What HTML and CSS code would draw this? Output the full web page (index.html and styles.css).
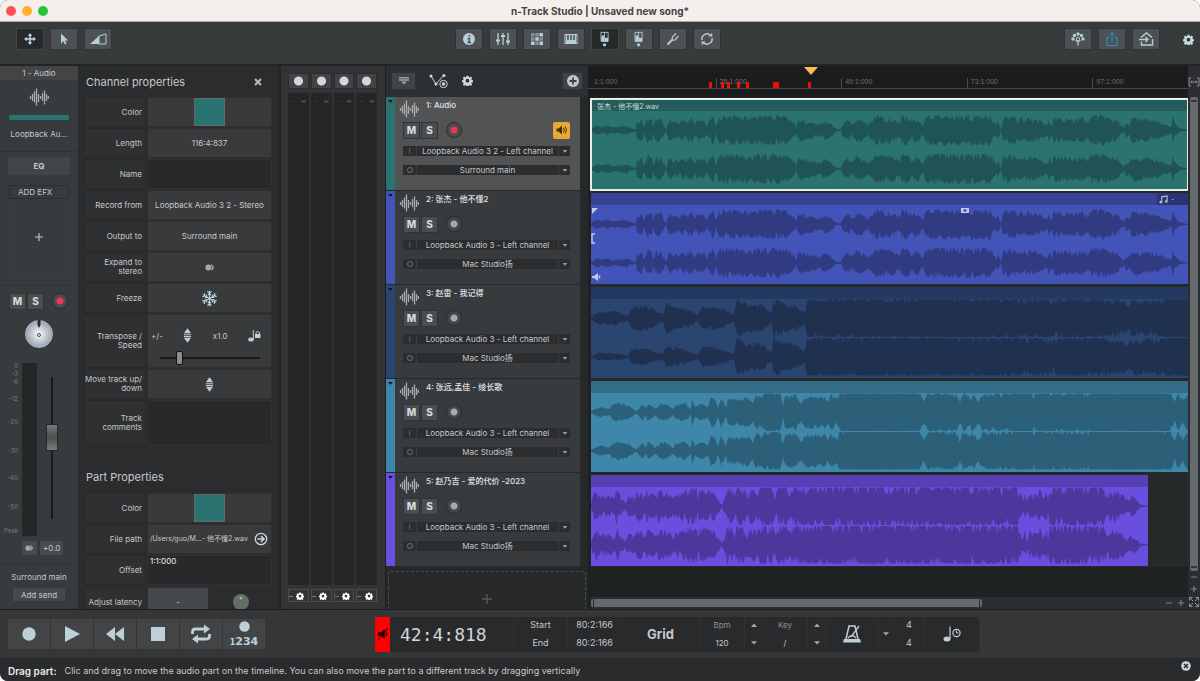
FILE: index.html
```
<!DOCTYPE html>
<html lang="en">
<head>
    <meta charset="UTF-8">
    <meta name="viewport" content="width=device-width, initial-scale=1.0">
    <title>n-Track Studio | Unsaved new song*</title>
    <link rel="stylesheet" href="styles.css">
</head>
<body>
    <!-- shared icons -->
    <svg class="sprite" aria-hidden="true">
        <symbol id="i-wave" viewBox="0 0 20 18"><path d="M1.500 8v3M3.500 6v7M5.500 3.500v11M7.500 .5v17M9.500 6v8M11.500 8v3M13.500 5v8M15.500 2.500v14M17.500 6v7M19.300 8v3" stroke="currentColor" stroke-width="1.300"/></symbol>
        <symbol id="i-gear" viewBox="0 0 16 16"><path fill-rule="evenodd" fill="currentColor" d="M6.500 1h3l.4 2 1.100.5 1.800-1.200 2 2-1.200 1.800.5 1.100 2 .4v3l-2 .4-.5 1.100 1.200 1.800-2 2-1.800-1.200-1.100.5-.4 1.800h-3l-.4-1.800-1.100-.5-1.800 1.200-2-2 1.200-1.800-.5-1.100-1.900-.4v-3l1.900-.4.5-1.100-1.200-1.800 2-2 1.800 1.200 1.100-.5zM8 5.500a2.700 2.700 0 1 0 0 5.400 2.700 2.700 0 0 0 0-5.400z"/></symbol>
        <symbol id="i-updown" viewBox="0 0 10 16"><path fill="currentColor" d="M5 0l4 5.500H1zM1 6.500h8v1.100H1zM1 8.500h8v1.100H1zM5 16l4-5.500H1z"/></symbol>
        <symbol id="i-down" viewBox="0 0 8 5"><path fill="currentColor" d="M0 0h8L4 4.500z"/></symbol>
        <symbol id="i-up" viewBox="0 0 8 5"><path fill="currentColor" d="M0 5h8L4 .5z"/></symbol>
        <symbol id="i-stereo" viewBox="0 0 12 8"><circle cx="4" cy="4" r="3.500" fill="currentColor"/><path d="M7.500.800a3.300 3.300 0 0 1 0 6.400 4.500 4.500 0 0 0 0-6.400z" fill="currentColor" stroke="currentColor"/></symbol>
        <symbol id="i-plus" viewBox="0 0 10 10"><path d="M5 0v10M0 5h10" stroke="currentColor" stroke-width="1.400"/></symbol>
        <symbol id="i-minus" viewBox="0 0 10 10"><path d="M0 5h10" stroke="currentColor" stroke-width="1.400"/></symbol>
        <symbol id="i-mixer" viewBox="0 0 16 16"><path d="M3 2v12M8 2v12M13 2v12" stroke="currentColor" stroke-width="1.300"/><path d="M1 9.500h4M6 5h4M11 10.500h4" stroke="currentColor" stroke-width="2.200"/></symbol>
        <symbol id="i-levels" viewBox="0 0 16 18"><path d="M3.500 1.500h8v10h-8zM7.500 1.500v10" fill="none" stroke="currentColor"/><path d="M4 5h3v7H4zM8 7.500h3.500V12H8z" fill="currentColor"/><circle cx="7.500" cy="15.500" r="1.800" fill="currentColor"/></symbol>
    </svg>

    <div class="app">
        <header class="titlebar">
            <div class="lights"><i class="red"></i><i class="amber"></i><i class="green"></i></div>
            <h1>n-Track Studio | Unsaved new song*</h1>
            <div></div>
        </header>

        <nav class="toolbar">
            <div class="tools">
                <button class="tool active" aria-label="Move"><svg viewBox="0 0 16 16"><path d="M8 4v8M4 8h8" stroke="currentColor"/><circle cx="8" cy="8" r="1.800" fill="currentColor"/><path fill="currentColor" d="M8 2l2 2.500-2 1.500-2-1.500zM8 14l2-2.500-2-1.500-2 1.500zM2 8l2.500-2L6 8l-1.500 2zM14 8l-2.500-2L10 8l1.500 2z"/></svg></button>
                <button class="tool" aria-label="Select"><svg viewBox="0 0 16 16"><path fill="currentColor" d="M5 2.500v10l2.400-2.200 1.500 3.300 1.700-.8L9.100 9.600l3-.2z"/></svg></button>
                <button class="tool wide" aria-label="Fade"><svg viewBox="0 0 18 14"><path fill="currentColor" d="M1 12L10 4v8z"/><path d="M10 4l7-2v10h-7M10 4V12" fill="none" stroke="currentColor"/></svg></button>
            </div>
            <div class="tools">
                <button class="tool" aria-label="Info"><svg viewBox="0 0 16 16"><circle cx="8" cy="8" r="6" fill="currentColor"/><path d="M8.500 4v1.600M6.500 7.500h2L8 11.500M6.500 11.500h3.500" stroke="#4e5153" stroke-width="1.500" fill="none"/></svg></button>
                <button class="tool" aria-label="Mixer"><svg><use href="#i-mixer"/></svg></button>
                <button class="tool" aria-label="Step sequencer"><svg viewBox="0 0 16 16"><path fill="currentColor" opacity=".5" d="M2 2h3.500v3.500H2zM6.300 2h3.500v3.500H6.300zM10.500 6.300H14v3.500h-3.500zM6.300 10.500h3.500V14H6.300zM2 6.300h3.500v3.500H2z"/><path fill="currentColor" d="M10.500 2H14v3.500h-3.500zM6.300 6.300h3.500v3.500H6.300zM2 10.500h3.500V14H2zM10.500 10.500H14V14h-3.500z"/></svg></button>
                <button class="tool" aria-label="Keyboard"><svg viewBox="0 0 16 16"><path fill="currentColor" d="M1.500 3h13v10h-13z"/><path d="M5 4v5M8 4v5M11 4v5" stroke="#4e5153" stroke-width="1.600"/><path d="M2.500 4v8M13.500 4v8" stroke="#4e5153" stroke-width=".5"/></svg></button>
                <button class="tool active" aria-label="Input meters"><svg viewBox="0 0 16 18"><use href="#i-levels"/></svg></button>
                <button class="tool" aria-label="Output meters"><svg viewBox="0 0 16 18"><use href="#i-levels"/></svg></button>
                <button class="tool" aria-label="Tuner"><svg viewBox="0 0 16 16"><path d="M2.500 13.500L7.500 8.500" stroke="currentColor" stroke-width="2"/><path d="M13.500 5L10.500 8.500q-2 1.500-3 0t.5-3L11 2.500" fill="none" stroke="currentColor" stroke-width="1.200"/></svg></button>
                <button class="tool" aria-label="Loop"><svg viewBox="0 0 16 16"><path d="M3 9a5 5 0 0 1 8.500-4.500M13 7a5 5 0 0 1-8.500 4.500" fill="none" stroke="currentColor" stroke-width="1.500"/><path fill="currentColor" d="M13.500 5.500h-4l3.500-3.500zM2.500 10.500h4L3 14z"/></svg></button>
            </div>
            <div class="tools">
                <button class="tool" aria-label="Community"><svg viewBox="0 0 16 16"><g fill="currentColor"><circle cx="3" cy="8" r="1.700"/><circle cx="4.500" cy="4.500" r="1.700"/><circle cx="8" cy="3" r="1.700"/><circle cx="11.500" cy="4.500" r="1.700"/><circle cx="13" cy="8" r="1.700"/></g><circle cx="8" cy="8" r="1.700" fill="none" stroke="currentColor"/><path d="M8 10v4.500M5.500 9.500l1.500 1M10.500 9.500l-1.500 1" stroke="currentColor" stroke-width="1.300"/></svg></button>
                <button class="tool share" aria-label="Share"><svg viewBox="0 0 16 16"><path d="M5.500 6H3v8.500h10V6h-2.500M8 11V1.500M5.500 4L8 1.500 10.500 4" fill="none" stroke="currentColor"/></svg></button>
                <button class="tool" aria-label="Export"><svg viewBox="0 0 16 16"><path d="M3 6.500L8.500 2 14 6.500M3.500 10.500v3.500h11V8M1 8.500h8.500M7.500 6l2.500 2.500L7.500 11" fill="none" stroke="currentColor" stroke-width="1.400"/></svg></button>
                <button class="bare" aria-label="Settings"><svg><use href="#i-gear"/></svg></button>
            </div>
        </nav>

        <main class="workspace">
            <section class="strip">
                <h2>1 - Audio</h2>
                <div class="strip-top">
                    <svg class="wave-icon"><use href="#i-wave"/></svg>
                    <i class="color-bar"></i>
                    <span>Loopback Au...</span>
                </div>
                <div class="strip-fx">
                    <button class="eq">EQ</button>
                    <button class="efx">ADD EFX</button>
                    <button class="fx-slot" aria-label="Add effect"><svg><use href="#i-plus"/></svg></button>
                </div>
                <div class="strip-fader">
                    <div class="ms-row">
                        <button class="ms">M</button><button class="ms">S</button>
                        <button class="rec armed" aria-label="Record"></button>
                    </div>
                    <button class="pan" aria-label="Pan"><svg viewBox="0 0 28 28"><path d="M12.500 0h3v5l-1.500 3-1.500-3z" fill="#2b2c2e"/><circle cx="14" cy="15" r="1.500" fill="none" stroke="#4c5058"/></svg></button>
                    <div class="fader">
                        <ul class="scale"><li>0</li><li>-3</li><li>-6</li><li>-12</li><li>-20</li><li>-30</li><li>-40</li><li>-50</li><li>Peak</li></ul>
                        <i class="level"></i>
                        <input type="range" class="volume" aria-label="Volume" min="0" max="100" value="59">
                    </div>
                    <div class="gain"><button aria-label="Stereo"><svg><use href="#i-stereo"/></svg></button><button>+0.0</button></div>
                </div>
                <div class="strip-send">
                    <span>Surround main</span>
                    <button>Add send</button>
                </div>
            </section>

            <section class="props">
                <div class="props-head"><h2>Channel properties</h2><button class="bare" aria-label="Close"><svg viewBox="0 0 8 8"><path d="M1 1l6 6M7 1L1 7" stroke="currentColor" stroke-width="2.200"/></svg></button></div>
                <div class="prop"><span>Color</span><div class="value"><button class="swatch" aria-label="Channel color"></button></div></div>
                <div class="prop"><span>Length</span><div class="value">116:4:837</div></div>
                <div class="prop"><label for="name">Name</label><input type="text" id="name"></div>
                <div class="prop"><span>Record from</span><button class="value">Loopback Audio 3 2 - Stereo</button></div>
                <div class="prop"><span>Output to</span><button class="value">Surround main</button></div>
                <div class="prop"><span>Expand to<br>stereo</span><button class="value" aria-label="Expand to stereo"><svg class="stereo"><use href="#i-stereo"/></svg></button></div>
                <div class="prop"><span>Freeze</span><button class="value" aria-label="Freeze"><svg class="snow" viewBox="-9 -9 18 18"><g id="arms"><path id="arm" d="M0 0V-8.300M-2.200-7.500L0-5.500 2.200-7.500M-1.800-4.800L0-3.200 1.800-4.800" fill="none" stroke="currentColor" stroke-width="1.100"/><use href="#arm" transform="rotate(60)"/><use href="#arm" transform="rotate(120)"/></g><use href="#arms" transform="rotate(180)"/></svg></button></div>
                <div class="prop transpose">
                    <label for="speed">Transpose /<br>Speed</label>
                    <div class="value">
                        <div class="transpose-row"><span>+/-</span><svg class="updown"><use href="#i-updown"/></svg><span>x1.0</span><svg class="note-lock" viewBox="0 0 13 13"><ellipse cx="3" cy="10.500" rx="2.800" ry="2" fill="currentColor"/><path d="M5.300 10V1" stroke="currentColor"/><path d="M7 5h5.500v4H7z" fill="currentColor"/><path d="M8 5V3.500q1.700-2 3.500 0V5" fill="none" stroke="currentColor"/></svg></div>
                        <input type="range" id="speed" class="speed" min="0" max="100" value="18">
                    </div>
                </div>
                <div class="prop"><span>Move track up/<br>down</span><button class="value" aria-label="Move track"><svg class="updown"><use href="#i-updown"/></svg></button></div>
                <div class="prop comments"><label for="comments">Track<br>comments</label><textarea id="comments"></textarea></div>

                <div class="props-head part"><h2>Part Properties</h2></div>
                <div class="prop"><span>Color</span><div class="value"><button class="swatch" aria-label="Part color"></button></div></div>
                <div class="prop"><span>File path</span><div class="value path"><span>/Users/guo/M...- 他不懂2.wav</span><svg viewBox="0 0 14 14"><circle cx="7" cy="7" r="5.700" fill="none" stroke="currentColor" stroke-width="1.300"/><path d="M3.500 7h6M7 4l3 3-3 3" fill="none" stroke="currentColor" stroke-width="1.600"/></svg></div></div>
                <div class="prop"><label for="offset">Offset</label><textarea id="offset">1:1:000</textarea></div>
                <div class="prop latency"><span>Adjust latency</span><button class="value">-</button><div class="knob-cell"><i class="knob"></i></div></div>
            </section>

            <section class="meters">
                <div class="meter"><button class="mon" aria-label="Meter 1"></button><div class="tube"><span>-</span><span>∞</span></div><button class="cfg" aria-label="Meter 1 settings"><svg><use href="#i-gear"/></svg></button></div>
                <div class="meter"><button class="mon" aria-label="Meter 2"></button><div class="tube"><span>-</span><span>∞</span></div><button class="cfg" aria-label="Meter 2 settings"><svg><use href="#i-gear"/></svg></button></div>
                <div class="meter"><button class="mon" aria-label="Meter 3"></button><div class="tube"><span>-</span><span>∞</span></div><button class="cfg" aria-label="Meter 3 settings"><svg><use href="#i-gear"/></svg></button></div>
                <div class="meter"><button class="mon" aria-label="Meter 4"></button><div class="tube"><span>-</span><span>∞</span></div><button class="cfg" aria-label="Meter 4 settings"><svg><use href="#i-gear"/></svg></button></div>
            </section>

            <section class="tracks">
                <div class="tracks-head">
                    <button class="tool" aria-label="Collapse"><svg viewBox="0 0 16 16"><path fill="currentColor" opacity=".7" d="M3 4h10v1.500H3zM3 6.200h10v1.500H3zM5 8.400h6L8 11.500z"/></svg></button>
                    <button class="bare automation" aria-label="Automation"><svg viewBox="0 0 20 16"><path d="M2 3l5 8 8-9" fill="none" stroke="currentColor"/><circle cx="2" cy="3" r="1.500" fill="currentColor"/><circle cx="7" cy="11" r="1.500" fill="currentColor"/><circle cx="15" cy="2.500" r="1.500" fill="currentColor"/><circle cx="14.500" cy="11" r="3.700" fill="none" stroke="currentColor"/><circle cx="14.500" cy="11" r="1.700" fill="currentColor"/></svg></button>
                    <button class="bare" aria-label="Track settings"><svg><use href="#i-gear"/></svg></button>
                    <button class="tool add" aria-label="Add track"><svg viewBox="0 0 16 16"><circle cx="8" cy="8" r="6" fill="currentColor"/><path d="M8 4.500v7M4.500 8h7" stroke="#414446" stroke-width="1.800"/></svg></button>
                </div>

                <article class="track teal selected">
                    <i class="tab"><svg><use href="#i-down"/></svg></i>
                    <div class="track-body">
                        <div class="track-name"><svg class="wave-icon"><use href="#i-wave"/></svg><h3>1: Audio</h3></div>
                        <div class="ms-row"><button class="ms">M</button><button class="ms">S</button><button class="rec armed" aria-label="Record"></button><button class="listen" aria-label="Monitor"><svg viewBox="0 0 14 14"><path fill="currentColor" d="M1.500 5.500h2L7 2.500v9L3.500 8.500h-2z"/><path d="M8.500 5q1.500 2 0 4M10 3.500q3 3.500 0 7" fill="none" stroke="currentColor"/></svg></button></div>
                        <div class="route"><b>I</b><select aria-label="Input"><option>Loopback Audio 3 2 - Left channel</option></select><svg><use href="#i-down"/></svg></div>
                        <div class="route"><i class="out"></i><select aria-label="Output"><option>Surround main</option></select><svg><use href="#i-down"/></svg></div>
                    </div>
                </article>
                <article class="track blue">
                    <i class="tab"><svg><use href="#i-down"/></svg></i>
                    <div class="track-body">
                        <div class="track-name"><svg class="wave-icon"><use href="#i-wave"/></svg><h3>2: 张杰 - 他不懂2</h3></div>
                        <div class="ms-row"><button class="ms">M</button><button class="ms">S</button><button class="rec" aria-label="Record"></button></div>
                        <div class="route"><b>I</b><select aria-label="Input"><option>Loopback Audio 3 - Left channel</option></select><svg><use href="#i-down"/></svg></div>
                        <div class="route"><i class="out"></i><select aria-label="Output"><option>Mac Studio扬</option></select><svg><use href="#i-down"/></svg></div>
                    </div>
                </article>
                <article class="track navy">
                    <i class="tab"><svg><use href="#i-down"/></svg></i>
                    <div class="track-body">
                        <div class="track-name"><svg class="wave-icon"><use href="#i-wave"/></svg><h3>3: 赵雷 - 我记得</h3></div>
                        <div class="ms-row"><button class="ms">M</button><button class="ms">S</button><button class="rec" aria-label="Record"></button></div>
                        <div class="route"><b>I</b><select aria-label="Input"><option>Loopback Audio 3 - Left channel</option></select><svg><use href="#i-down"/></svg></div>
                        <div class="route"><i class="out"></i><select aria-label="Output"><option>Mac Studio扬</option></select><svg><use href="#i-down"/></svg></div>
                    </div>
                </article>
                <article class="track sky">
                    <i class="tab"><svg><use href="#i-down"/></svg></i>
                    <div class="track-body">
                        <div class="track-name"><svg class="wave-icon"><use href="#i-wave"/></svg><h3>4: 张远,孟佳 - 绫长歌</h3></div>
                        <div class="ms-row"><button class="ms">M</button><button class="ms">S</button><button class="rec" aria-label="Record"></button></div>
                        <div class="route"><b>I</b><select aria-label="Input"><option>Loopback Audio 3 - Left channel</option></select><svg><use href="#i-down"/></svg></div>
                        <div class="route"><i class="out"></i><select aria-label="Output"><option>Mac Studio扬</option></select><svg><use href="#i-down"/></svg></div>
                    </div>
                </article>
                <article class="track violet">
                    <i class="tab"><svg><use href="#i-down"/></svg></i>
                    <div class="track-body">
                        <div class="track-name"><svg class="wave-icon"><use href="#i-wave"/></svg><h3>5: 赵乃吉 - 爱的代价 -2023</h3></div>
                        <div class="ms-row"><button class="ms">M</button><button class="ms">S</button><button class="rec" aria-label="Record"></button></div>
                        <div class="route"><b>I</b><select aria-label="Input"><option>Loopback Audio 3 - Left channel</option></select><svg><use href="#i-down"/></svg></div>
                        <div class="route"><i class="out"></i><select aria-label="Output"><option>Mac Studio扬</option></select><svg><use href="#i-down"/></svg></div>
                    </div>
                </article>
                <button class="new-track" aria-label="New track"><svg><use href="#i-plus"/></svg></button>
            </section>

            <section class="timeline">
                <div class="ruler">
                    <span>1:1:000</span><span>25:1:000</span><span>49:1:000</span><span>73:1:000</span><span>97:1:000</span>
                    <div class="markers" id="markers"></div>
                    <svg class="playhead" viewBox="0 0 14 8"><path fill="#fbbd4b" d="M0 0h14L7 8z"/></svg>
                </div>
                <div class="lane"><div class="clip teal selected"><div class="clip-head">张杰 - 他不懂2.wav</div><svg class="wave" data-wave="a" viewBox="0 0 597 78" preserveAspectRatio="none"></svg></div></div>
                <div class="lane"><div class="clip blue"><div class="clip-head"><span class="pitch"><svg viewBox="0 0 10 10"><path d="M3 8V2l6-1v6" fill="none" stroke="currentColor" stroke-width="1.300"/><circle cx="2" cy="8" r="1.500" fill="currentColor"/><circle cx="8" cy="7.200" r="1.500" fill="currentColor"/></svg>-</span></div><svg class="wave" data-wave="a" viewBox="0 0 597 78" preserveAspectRatio="none"></svg>
                    <svg class="handles" viewBox="0 0 10 78"><g fill="#c3c8ea"><path d="M1 2h6L1 8zM1 70h2l4-3v8l-4-3H1z"/><path d="M4 28H1v9h3M8.500 69.500v3" fill="none" stroke="#c3c8ea" stroke-width="1.500"/></g></svg>
                    <svg class="gain-handle" viewBox="0 0 8 5"><path fill="#c3c8ea" d="M0 0h8v5H0z"/><path fill="#303a80" d="M2.500 1.500h3v2h-3z"/></svg></div></div>
                <div class="lane"><div class="clip navy"><div class="clip-head"></div><svg class="wave" data-wave="b" viewBox="0 0 597 78" preserveAspectRatio="none"></svg></div></div>
                <div class="lane"><div class="clip sky"><div class="clip-head"></div><svg class="wave" data-wave="c" viewBox="0 0 597 78" preserveAspectRatio="none"></svg></div></div>
                <div class="lane"><div class="clip violet short"><div class="clip-head"></div><svg class="wave" data-wave="d" viewBox="0 0 557 78" preserveAspectRatio="none"></svg></div></div>
                <div class="hscroll">
                    <div class="thumb"></div>
                    <div class="zoom"><button aria-label="Zoom out"><svg><use href="#i-minus"/></svg></button><button aria-label="Zoom in"><svg><use href="#i-plus"/></svg></button></div>
                </div>
            </section>

            <aside class="vscroll">
                <button class="fit" aria-label="Fit"><svg viewBox="0 0 12 10"><path d="M3 1H1v8h2M9 1h2v8H9M3 5h6M4 3.500L2.800 5 4 6.500M8 3.500L9.200 5 8 6.500" fill="none" stroke="currentColor"/></svg></button>
                <div class="thumb"></div>
                <button aria-label="Zoom out vertically"><svg><use href="#i-minus"/></svg></button>
                <button aria-label="Zoom in vertically"><svg><use href="#i-plus"/></svg></button>
                <button class="expand" aria-label="Expand"><svg viewBox="0 0 10 10"><path d="M.5 3.500v-3h3M6.500.5h3v3M.5 6.500v3h3M6.500 9.500h3v-3M1 1l3 3M9 1L6 4M1 9l3-3M9 9L6 6" fill="none" stroke="currentColor"/></svg></button>
            </aside>
        </main>

        <footer class="transport">
            <div class="play-buttons">
                <button aria-label="Record"><svg viewBox="0 0 20 20"><circle cx="10" cy="10" r="6.700" fill="currentColor"/></svg></button>
                <button aria-label="Play"><svg viewBox="0 0 20 20"><path fill="currentColor" d="M3 2l15 8-15 8z"/></svg></button>
                <button aria-label="Rewind"><svg viewBox="0 0 20 20"><path fill="currentColor" d="M1 10l9-7v14zM10 10l9-7v14z"/></svg></button>
                <button aria-label="Stop"><svg viewBox="0 0 20 20"><path fill="currentColor" d="M3 3h14v14H3z"/></svg></button>
                <button aria-label="Loop"><svg viewBox="0 0 20 20"><path d="M1.500 10V8q0-3 3-3H14M18.500 10v2q0 3-3 3H6" fill="none" stroke="currentColor" stroke-width="2.800"/><path fill="currentColor" d="M13 .5l6 4.500-6 4.500zM7 10.500l-6 4.500L7 19.500z"/></svg></button>
                <button class="count" aria-label="Count in"><svg viewBox="0 0 12 12"><circle cx="6" cy="6" r="5.700" fill="currentColor"/></svg><span><small>1</small>234</span></button>
            </div>
            <div class="panel">
                <button class="mute" aria-label="Mute"><svg viewBox="0 0 12 14"><path fill="#300" d="M1 5h3l4-3v10L4 9H1z"/><path d="M9 4.500q2 2.500 0 5M1 13L11 1" fill="none" stroke="#300"/></svg></button>
                <output class="clock">42:4:818</output>
                <div class="pair start"><span>Start</span><span>End</span></div>
                <div class="pair start"><span>80:2:166</span><span>80:2:166</span></div>
                <button class="grid-btn">Grid</button>
                <div class="pair bpm"><span class="dim">Bpm</span><span>120</span></div>
                <div class="pair steps"><button aria-label="Bpm up"><svg><use href="#i-up"/></svg></button><button aria-label="Bpm down"><svg><use href="#i-down"/></svg></button></div>
                <div class="pair bpm"><span class="dim">Key</span><span>/</span></div>
                <div class="pair steps"><button aria-label="Key up"><svg><use href="#i-up"/></svg></button><button aria-label="Key down"><svg><use href="#i-down"/></svg></button></div>
                <button class="metronome" aria-label="Metronome"><svg viewBox="0 0 20 20"><path d="M4 15L7 2h6l3 13" fill="none" stroke="currentColor" stroke-width="1.500"/><path fill="currentColor" d="M2 15h16l1 3.500H1z"/><path d="M6 14q4-5 8 0M9 13l8-11" fill="none" stroke="currentColor" stroke-width="1.300"/></svg></button>
                <button class="metro-menu" aria-label="Metronome menu"><svg><use href="#i-down"/></svg></button>
                <div class="pair sig"><span>4</span><span>4</span></div>
                <button class="tap" aria-label="Tap tempo"><svg viewBox="0 0 18 18"><ellipse cx="4" cy="14" rx="3.500" ry="2.500" fill="currentColor"/><path d="M7 13.500V1.500" stroke="currentColor" stroke-width="1.200"/><circle cx="13.500" cy="8" r="3.600" fill="none" stroke="currentColor" stroke-width="1.200"/><path d="M13.500 5.500V8h2" fill="none" stroke="currentColor"/></svg></button>
            </div>
        </footer>

        <div class="status">
            <strong>Drag part:</strong>
            <p>Clic and drag to move the audio part on the timeline. You can also move the part to a different track by dragging vertically</p>
            <button class="bare" aria-label="Dismiss"><svg viewBox="0 0 12 12"><circle cx="6" cy="6" r="4.800" fill="currentColor"/><path d="M4 4l4 4M8 4L4 8" stroke="#2a2b2d" stroke-width="1.500"/></svg></button>
        </div>
    </div>
    <script src="script.js"></script>
</body>
</html>
```
FILE: styles.css
```
* {
    margin: 0;
    padding: 0;
    box-sizing: border-box;
}

html {
    background: #fff;
}

body {
    height: 100vh;
    font-family: Inter, "Noto Sans CJK SC", sans-serif;
    font-size: 8px;
    line-height: 10px;
    color: #c6c9cb;
    overflow: hidden;
}

button, input, select, textarea {
    font: inherit;
    color: inherit;
    border: none;
    outline: none;
    background: none;
}

button {
    display: flex;
    align-items: center;
    justify-content: center;
}

textarea {
    resize: none;
}

ul {
    list-style: none;
}

svg {
    display: block;
    flex: none;
}

.sprite {
    position: absolute;
    width: 0;
    height: 0;
}

.teal { --body: #2b7370; --head: #245b5b; --wave: #205353; }
.blue { --body: #4354b9; --head: #374292; --wave: #303b82; }
.navy { --body: #2b4571; --head: #24395f; --wave: #203150; }
.sky { --body: #3e87aa; --head: #346b87; --wave: #2c6079; }
.violet { --body: #6a4fdf; --head: #5740b3; --wave: #4c379c; }

.app {
    display: flex;
    flex-direction: column;
    height: 100%;
    border-radius: 8px;
    overflow: hidden;
    background: #2b2c2e;
}

/* title bar */
.titlebar {
    display: grid;
    grid-template-columns: 1fr auto 1fr;
    align-items: center;
    height: 22px;
    padding: 0 6px;
    background: #f4efec;
    border-bottom: 1px solid #a9a6a5;
}

.titlebar h1 {
    font-size: 10px;
    font-weight: 700;
    color: #454342;
}

.lights {
    display: flex;
    gap: 6px;
}

.lights i {
    width: 10px;
    height: 10px;
    border-radius: 50%;
}

.red { background: #fe5450; }
.amber { background: #fdb429; }
.green { background: #26c63a; }

/* toolbar */
.toolbar {
    display: flex;
    justify-content: space-between;
    height: 44px;
    padding: 6px 6px 0 16px;
    background: #383b3c;
    border-bottom: 2px solid #222526;
}

.tools {
    display: flex;
    gap: 6px;
}

.tool {
    width: 28px;
    height: 22px;
    background: #4e5153;
    border: 1px solid #303233;
    color: #b5ced8;
}

.tool.active {
    background: #27292b;
    border-color: #454849;
}

.tool svg {
    width: 16px;
    height: 16px;
}

.tool.wide svg {
    width: 18px;
}

.tool.share {
    color: #2397c4;
}

.bare {
    color: #c8d9df;
}

.bare svg {
    width: 11px;
    height: 11px;
}

.tools .bare {
    width: 11px;
    height: 22px;
    margin-left: 17px;
}

/* workspace */
.workspace {
    flex: 1;
    min-height: 0;
    display: grid;
    grid-template-columns: 78px 203px 105px 202px 1fr 12px;
    grid-template-rows: 100%;
    border-bottom: 1px solid #1c1d1e;
}

.workspace > * {
    min-height: 0;
    overflow: hidden;
}

/* channel strip */
.strip {
    display: flex;
    flex-direction: column;
    background: #363b3e;
    text-align: center;
}

.strip h2 {
    height: 14px;
    background: #424445;
    font-size: 8px;
    font-weight: 400;
    line-height: 14px;
}

.strip-top {
    display: flex;
    flex-direction: column;
    align-items: center;
    height: 72px;
    padding-top: 8px;
    border-bottom: 1px solid #303437;
}

.wave-icon {
    width: 20px;
    height: 18px;
    color: #a9abac;
}

.color-bar {
    width: 60px;
    height: 5px;
    margin: 9px 0;
    border-radius: 1px;
    background: #2b7370;
}

.strip-fx {
    display: flex;
    flex-direction: column;
    align-items: center;
    height: 134px;
    padding-top: 5px;
    border-bottom: 1px solid #303437;
}

.eq {
    width: 62px;
    height: 18px;
    background: #424547;
    font-weight: 700;
    margin-bottom: 10px;
}

.efx {
    width: 60px;
    height: 14px;
    padding-left: 8px;
    justify-content: flex-start;
    border: 1px solid #2a2e30;
}

.fx-slot {
    width: 60px;
    height: 77px;
    border: 1px solid #3a3b3d;
    border-top: none;
}

.fx-slot svg {
    width: 8px;
    height: 8px;
}

.strip-fader {
    padding-top: 6px;
    height: 278px;
    border-bottom: 1px solid #303437;
}

.ms-row {
    display: flex;
    align-items: center;
    gap: 1px;
    height: 18px;
}

.strip .ms-row {
    padding-left: 9px;
}

.ms {
    width: 17px;
    height: 17px;
    background: #4a4e50;
    border: 1px solid #303436;
    font-size: 10px;
    font-weight: 800;
    color: #d5d7d8;
}

.rec {
    width: 16px;
    height: 16px;
    margin-left: 7px;
    border-radius: 50%;
    border: 1px solid #2b2c2e;
    background: radial-gradient(circle, #a6a8a9 3px, #434547 4px);
}

.rec.armed {
    background: radial-gradient(circle, #ee3450 3px, #4a4b4d 4px);
}

.pan {
    width: 28px;
    height: 28px;
    margin: 10px auto 0;
    border-radius: 50%;
    border: 1px solid #b4b8bd;
    background: radial-gradient(circle, #f0efef 10%, #92a0b0 75%);
}

.pan svg {
    width: 28px;
    height: 28px;
}

.fader {
    display: grid;
    grid-template-columns: 18px 15px 1fr;
    gap: 4px;
    margin-top: 15px;
    height: 170px;
}

.scale {
    display: grid;
    grid-template-rows: 8px 8px 17px 23px 29px 27px 29px 24px 8px;
    font-size: 6px;
    line-height: 6px;
    text-align: right;
    color: #767b7e;
}

.level {
    background: #252726;
}

.volume {
    appearance: none;
    writing-mode: vertical-lr;
    direction: rtl;
    width: 12px;
    height: 142px;
    margin: 14px 0 0 5px;
    background: linear-gradient(to right, transparent 5px, #17191a 5px, #17191a 7px, transparent 7px);
}

.volume::-webkit-slider-thumb {
    appearance: none;
    width: 12px;
    height: 27px;
    border: 1px solid #25282a;
    background: linear-gradient(#777, #505152 45%, #505152 55%, #7c7c7c);
}

.gain {
    display: flex;
    gap: 3px;
    margin: 8px 0 0 22px;
}

.gain button {
    height: 14px;
    padding: 0 3px;
    background: #484b4d;
}

.gain button svg {
    width: 9px;
    height: 6px;
    color: #a6a8a9;
}

.strip-send {
    padding-top: 8px;
}

.strip-send button {
    width: 52px;
    height: 13px;
    margin: 6px auto 0;
    background: #45494b;
}

/* properties */
.props {
    padding: 0 7px 0 6px;
    background: #2b2c2e;
    border-right: 2px solid #242527;
}

.props-head {
    display: flex;
    align-items: center;
    justify-content: space-between;
    height: 31px;
    padding: 0 10px 0 2px;
}

.props-head.part {
    height: 47px;
    padding-top: 14px;
}

.props-head h2 {
    font-size: 11px;
    font-weight: 400;
    line-height: 14px;
}

.props-head .bare svg {
    width: 8px;
    height: 8px;
    color: #b5b8ba;
}

.prop {
    display: grid;
    grid-template-columns: 62px minmax(0, 1fr);
    gap: 1px;
    height: 30px;
    margin-bottom: 1px;
}

.prop > label, .prop > span {
    display: flex;
    align-items: center;
    justify-content: flex-end;
    padding-right: 3px;
    background: #2f3032;
    border: 1px solid #28292b;
    line-height: 9px;
    text-align: right;
    white-space: nowrap;
}

.value {
    display: flex;
    align-items: center;
    justify-content: center;
    background: #393a3c;
    border: 1px solid #2f3032;
}

.prop > input, .prop > textarea {
    width: 100%;
    height: 100%;
    padding: 0 2px;
    background: #29292b;
    border: 1px solid #313234;
    color: #f0f0f0;
    line-height: 10px;
}

.swatch {
    width: 31px;
    height: 28px;
    border: 1px solid #666;
    background: #2b7370;
}

.stereo {
    width: 10px;
    height: 7px;
    color: #a6a8a9;
}

.snow {
    width: 17px;
    height: 17px;
    color: #bcd7e0;
}

.updown {
    width: 9px;
    height: 15px;
    color: #bcd0d8;
}

.prop.transpose {
    height: 54px;
}

.transpose .value {
    flex-direction: column;
    justify-content: flex-end;
    gap: 8px;
    padding-bottom: 2px;
}

.transpose-row {
    display: flex;
    align-items: center;
    justify-content: space-between;
    width: 100%;
    padding: 0 10px 0 3px;
}

.note-lock {
    width: 13px;
    height: 13px;
    color: #bcd0d8;
}

.speed {
    appearance: none;
    width: 100px;
    height: 14px;
    background: linear-gradient(transparent 6px, #19191b 6px, #19191b 8px, transparent 8px);
}

.speed::-webkit-slider-thumb {
    appearance: none;
    width: 7px;
    height: 14px;
    border: 1px solid #111;
    border-radius: 2px;
    background: #8b8c8d;
}

.prop.comments {
    height: 45px;
}

.value.path {
    justify-content: space-between;
    padding: 0 3px 0 2px;
    white-space: nowrap;
}

.path span {
    min-width: 0;
    overflow: hidden;
    font-size: 7px;
}

.path svg {
    width: 14px;
    height: 14px;
    color: #c8d9df;
}

.prop.latency {
    grid-template-columns: 62px 1fr 1fr;
    margin-top: 2px;
}

.latency .value {
    background: #45484a;
}

.knob-cell {
    display: flex;
    align-items: center;
    justify-content: center;
}

.knob {
    width: 16px;
    height: 16px;
    border-radius: 50%;
    background: radial-gradient(circle at 50% 25%, #5fd75f 1px, #696c6d 2px);
}

/* input meters */
.meters {
    display: grid;
    grid-template-columns: repeat(4, 1fr);
    gap: 2px;
    padding: 7px 8px 7px 7px;
    background: #323335;
    border-right: 1px solid #1d1e1f;
}

.meter {
    display: flex;
    flex-direction: column;
}

.mon {
    height: 16px;
    background: radial-gradient(circle, #d2d4de 4px, #414345 5px);
    border: 1px solid #2c2d2f;
}

.tube {
    display: grid;
    grid-template-columns: 1fr 1fr;
    flex: 1;
    margin: 4px 0;
    background: #252726;
    color: #7b7e80;
    text-align: center;
    line-height: 16px;
    font-size: 5px;
}

.cfg {
    height: 13px;
    padding-left: 4px;
    border: 1px solid #4c4d4f;
    background: linear-gradient(#77797b, #77797b) 0 6px / 4px 1px no-repeat;
    color: #fff;
}

.cfg svg {
    width: 8px;
    height: 8px;
}

/* track list */
.tracks {
    display: flex;
    flex-direction: column;
    background: #262829;
}

.tracks-head {
    display: flex;
    align-items: center;
    flex: none;
    height: 31px;
    padding: 0 5px 2px;
    gap: 13px;
    background: #2c3032;
}

.tracks-head .tool {
    width: 25px;
    height: 18px;
    background: #414446;
    color: #c3c7c9;
}

.tracks-head .tool.add {
    width: 21px;
    margin-left: auto;
}

.automation svg {
    width: 20px;
    height: 16px;
}

.track {
    display: grid;
    grid-template-columns: 9px 1fr;
    flex: none;
    height: 94px;
    margin-right: 8px;
    padding-bottom: 1px;
}

.tab {
    background: var(--body);
    padding: 3px 2px;
}

.tab svg {
    width: 5px;
    height: 3px;
    color: #111;
}

.track-body {
    padding: 2px 10px 0 8px;
    background: #383b3d;
}

.track.selected .track-body {
    background: #525355;
}

.track-name {
    display: flex;
    gap: 7px;
    margin-left: -4px;
}

.track-name .wave-icon {
    margin-top: 1px;
}

.track h3 {
    font-size: 8px;
    font-weight: 500;
    line-height: 12px;
    color: #e0e2e3;
}

.track .ms-row {
    margin: 3px 0 7px;
}

.listen {
    width: 17px;
    height: 17px;
    margin-left: auto;
    border-radius: 2px;
    background: #e6a934;
    color: #40300c;
}

.listen svg {
    width: 14px;
    height: 14px;
}

.route {
    display: grid;
    grid-template-columns: 13px 1fr 11px;
    align-items: center;
    height: 10px;
    margin-bottom: 9px;
    background: #2b2d2f;
}

.route b {
    font-weight: 400;
    color: #6c7072;
    text-align: center;
}

.route .out {
    width: 6px;
    height: 6px;
    margin: 0 auto;
    border: 1px solid #6c7072;
    border-radius: 50%;
}

.route select {
    appearance: none;
    width: 100%;
    height: 10px;
    text-align: center;
    text-align-last: center;
    border-left: 1px solid #3a3c3e;
    border-right: 1px solid #3a3c3e;
    line-height: 10px;
}

.route > svg {
    width: 6px;
    height: 3px;
    margin: 0 auto;
    color: #9a9d9f;
}

.new-track {
    flex: 1;
    align-items: flex-end;
    margin: 4px 2px 0;
    padding-bottom: 5px;
    border: 1px dashed #494b4d;
    border-bottom: none;
    border-radius: 3px 3px 0 0;
    color: #55585a;
}

.new-track svg {
    width: 10px;
    height: 10px;
}

/* timeline */
.timeline {
    display: flex;
    flex-direction: column;
    padding-left: 3px;
    background: #1f2223;
}

.ruler {
    position: relative;
    display: flex;
    flex: none;
    height: 31px;
    padding-top: 12px;
    margin-left: -3px;
    padding-left: 2px;
    background: linear-gradient(#1b1c1d 22px, #46484a 22px, #46484a 23px, #1b1c1d 23px);
}

.ruler span {
    flex: 0 0 21%;
    height: 10px;
    padding-left: 3px;
    border-left: 1px solid #4a4c4e;
    font-family: "Liberation Sans", sans-serif;
    font-size: 7px;
    line-height: 8px;
    color: #6d6f71;
}

.ruler span:first-child {
    border-color: transparent;
}

/* red ticks sit on top of the ruler labels */
.markers i {
    position: absolute;
    top: 16px;
    width: 3px;
    height: 6px;
    background: #f40b0b;
}

.markers .wide {
    width: 6px;
}

.playhead {
    position: absolute;
    left: 36%;
    top: 1px;
    width: 14px;
    height: 8px;
}

.lane {
    flex: none;
    height: 94px;
    padding: 2px 0 1px;
    background: #26292a;
}

.clip {
    position: relative;
    display: flex;
    flex-direction: column;
    height: 91px;
    background: var(--body);
}

.clip.short {
    width: 93.3%;
}

.clip.selected {
    outline: 2px solid #e6eee6;
    outline-offset: -1px;
}

.clip-head {
    display: flex;
    justify-content: flex-start;
    flex: none;
    height: 12px;
    padding-left: 6px;
    background: var(--head);
    font-size: 7px;
    line-height: 15px;
    color: #c9dbda;
}

.pitch {
    display: flex;
    align-items: center;
    gap: 3px;
    width: 31px;
    margin-left: auto;
    padding-left: 2px;
    background: #2c3574;
    color: #b3b6cc;
}

.pitch svg {
    width: 9px;
    height: 9px;
}

.wave {
    flex: 1;
    width: 100%;
    min-height: 0;
}

.wave path {
    fill: var(--wave);
}

.handles {
    position: absolute;
    left: 0;
    bottom: 0;
    width: 10px;
    height: 78px;
}

.gain-handle {
    position: absolute;
    left: 62%;
    top: 15px;
    width: 8px;
    height: 5px;
}

.hscroll {
    display: flex;
    align-items: center;
    justify-content: space-between;
    height: 12px;
    margin-top: auto;
    padding-right: 4px;
    background: #2b2f31;
}

.hscroll .thumb {
    width: 66%;
    height: 8px;
    border-radius: 2px;
    border: solid #656b6d;
    border-width: 0 2px;
    background: linear-gradient(to right, #2b2f31 1px, #656b6d 1px, #656b6d calc(100% - 1px), #2b2f31 calc(100% - 1px));
}

.zoom {
    display: flex;
    gap: 6px;
    color: #909598;
}

.zoom svg, .vscroll button svg {
    width: 6px;
    height: 6px;
}

.vscroll {
    display: flex;
    flex-direction: column;
    align-items: center;
    background: #2b2d30;
    color: #909598;
}

.vscroll .fit {
    height: 31px;
}

.vscroll .fit svg {
    width: 12px;
    height: 10px;
}

.vscroll .thumb {
    flex: 1;
    width: 8px;
    border: solid #656b6d;
    border-width: 3px 1px;
    border-radius: 2px;
    background: linear-gradient(#33373a 2px, #656b6d 2px, #656b6d calc(100% - 2px), #33373a calc(100% - 2px));
}

.vscroll button {
    height: 12px;
}

.vscroll .expand {
    height: 14px;
}

.vscroll .expand svg {
    width: 10px;
    height: 10px;
}

/* transport */
.transport {
    display: grid;
    grid-template-columns: 367px 1fr;
    align-items: center;
    height: 48px;
    padding: 0 8px;
    background: #353638;
}

.play-buttons {
    display: flex;
    gap: 1px;
}

.play-buttons button {
    width: 42px;
    height: 30px;
    background: #424446;
    color: #bdd0d8;
}

.play-buttons svg {
    width: 20px;
    height: 20px;
}

.play-buttons .count {
    flex-direction: column;
    gap: 4px;
}

.play-buttons .count svg {
    width: 11px;
    height: 11px;
}

.count span {
    font-family: "DejaVu Sans", sans-serif;
    font-size: 11px;
    font-weight: 700;
    line-height: 11px;
}

.count small {
    font-size: 8px;
}

.panel {
    display: flex;
    justify-self: start;
    height: 35px;
    background: #292a2c;
}

.panel > * + * {
    border-right: 1px solid #2f3032;
}

.mute {
    width: 15px;
    background: #fe0000;
}

.mute svg {
    width: 12px;
    height: 14px;
}

.clock {
    width: 124px;
    padding-left: 10px;
    font-family: "DejaVu Sans Mono", monospace;
    font-size: 18px;
    line-height: 35px;
    color: #d3d5d6;
}

.pair {
    display: grid;
    grid-template-rows: 1fr 1fr;
    place-items: center;
    font-size: 9px;
}

.pair .dim {
    color: #8d9092;
}

.pair.start {
    width: 54px;
}

.grid-btn {
    width: 78px;
    font-size: 13px;
    font-weight: 700;
}

.pair.bpm {
    width: 45px;
    font-size: 8px;
}

.pair.steps {
    width: 18px;
}

.steps svg, .metro-menu svg {
    width: 6px;
    height: 4px;
    color: #a4a7a9;
}

.metronome {
    width: 53px;
    color: #bdd0d8;
}

.metronome svg {
    width: 20px;
    height: 20px;
}

.metro-menu {
    width: 15px;
}

.pair.sig {
    width: 31px;
}

.tap {
    width: 55px;
    color: #bdd0d8;
}

.tap svg {
    width: 18px;
    height: 18px;
}

/* status bar */
.status {
    display: flex;
    align-items: center;
    height: 23px;
    padding: 2px 8px 0;
    gap: 8px;
    background: #2a2b2d;
    font-size: 9px;
}

.status strong {
    font-size: 10px;
    font-weight: 600;
    color: #e8e9ea;
}

.status .bare {
    align-self: flex-start;
    margin-left: auto;
}

.status .bare svg {
    width: 12px;
    height: 12px;
}
```
FILE: script.js
```
// Envelope points: x, half height of the waveform (out of 19)
const waves = {
  a: {
    jitter: 0.5,
    points: [0,1, 6,5, 10,3, 16,5, 20,3, 26,3, 30,4, 36,5, 40,2, 45,1, 46,9, 51,10, 53,4, 57,13, 61,10, 62,3, 65,11, 70,11, 72,7, 75,1, 78,10, 83,9, 88,7, 92,10, 95,8, 100,13, 104,6, 107,11, 113,10, 116,4, 118,9, 122,14, 125,4, 128,13, 133,14, 160,13, 187,14, 195,13, 203,8, 205,2, 207,10, 211,11, 216,9, 221,8, 228,6, 234,9, 241,6, 244,2, 247,1, 250,1, 252,7, 258,10, 261,6, 266,12, 271,10, 276,6, 281,9, 285,14, 295,12, 300,13, 309,7, 311,14, 317,14, 321,8, 326,13, 332,4, 335,13, 341,14, 372,14, 373,9, 375,14, 399,14, 405,5, 407,8, 410,1, 412,11, 416,13, 424,13, 426,8, 428,12, 433,11, 442,12, 449,9, 456,5, 458,11, 461,6, 463,12, 476,11, 486,10, 491,13, 496,8, 500,14, 512,14, 526,10, 529,6, 533,2, 535,8, 538,5, 541,12, 552,11, 566,9, 573,6, 578,4, 580,3, 582,13, 585,5, 589,2, 593,1, 597,0]
  },
  b: {
    jitter: 0.4,
    points: [0,0, 3,4, 8,6, 14,6, 24,7, 31,4, 37,3, 41,10, 46,12, 54,12, 61,10, 66,6, 72,4, 75,15, 84,11, 94,9, 99,8, 107,3, 111,13, 117,10, 124,11, 134,9, 143,3, 146,19, 154,15, 161,13, 171,13, 177,7, 181,5, 182,18, 191,16, 194,13, 204,12, 214,6, 216,20, 240,21, 300,22, 380,22, 425,21, 437,18, 440,21, 460,20, 464,15, 468,21, 505,21, 516,17, 525,18, 535,15, 537,11, 541,17, 552,16, 572,18, 575,25, 597,25]
  },
  b2: {
    jitter: 0.4,
    points: [0,0, 4,2, 8,4, 31,3, 37,1, 41,7, 50,8, 54,9, 61,5, 72,3, 75,10, 84,9, 94,7, 107,2, 111,10, 124,9, 134,6, 143,3, 146,20, 154,14, 171,12, 181,5, 182,18, 194,14, 204,12, 214,6, 216,20, 240,21, 300,22, 425,21, 437,17, 440,21, 464,15, 468,21, 505,21, 516,17, 535,15, 537,11, 541,17, 572,18, 575,25, 597,25]
  },
  c: {
    jitter: 0.3,
    points: [0,1, 4,3, 10,5, 19,3, 21,7, 27,9, 37,7, 45,1, 52,8, 55,3, 57,9, 64,3, 70,8, 75,8, 82,3, 84,6, 94,9, 100,3, 101,13, 104,5, 110,9, 117,5, 120,15, 125,11, 127,4, 130,15, 135,5, 137,13, 147,12, 154,14, 157,15, 162,9, 165,17, 170,14, 175,18, 180,21, 189,21, 192,6, 194,15, 204,17, 210,9, 215,16, 224,15, 234,15, 237,10, 240,17, 246,12, 249,20, 257,23, 327,22, 333,10, 337,19, 365,18, 369,10, 372,18, 379,14, 382,19, 387,10, 391,17, 402,18, 422,19, 426,22, 441,22, 443,14, 444,21, 465,20, 479,19, 485,20, 497,18, 499,23, 572,22, 579,19, 584,10, 587,19, 592,11, 597,19]
  },
  d: {
    jitter: 0.6,
    points: [0,1, 2,10, 5,16, 9,9, 14,11, 24,8, 25,17, 31,8, 34,4, 37,11, 44,8, 47,16, 54,9, 56,15, 66,9, 67,16, 74,13, 82,10, 91,13, 101,19, 105,19, 107,9, 109,19, 117,15, 124,13, 127,7, 131,2, 133,6, 136,18, 141,17, 144,9, 146,20, 152,19, 156,11, 161,19, 166,12, 171,20, 181,19, 184,11, 189,20, 194,20, 199,12, 202,20, 211,20, 227,22, 299,22, 352,22, 425,22, 432,7, 434,14, 436,5, 439,13, 446,12, 449,16, 452,9, 456,15, 457,6, 459,22, 472,20, 479,22, 499,21, 512,18, 517,8, 519,15, 526,14, 532,11, 537,6, 541,10, 546,6, 549,2, 557,0]
  }
};

// repeatable noise so the waves look the same on every load
function makeRandom(seed) {
  return () => {
    seed = (seed * 16807) % 2147483647;
    return seed / 2147483647;
  };
}

function heightAt(points, x) {
  for (let i = 2; i < points.length; i += 2) {
    if (x <= points[i]) {
      const t = (x - points[i - 2]) / (points[i] - points[i - 2]);
      return points[i - 1] + t * (points[i + 1] - points[i - 1]);
    }
  }
  return 0;
}

function channelPath(wave, center, seed) {
  const random = makeRandom(seed);
  const { points, jitter } = wave;
  const end = points[points.length - 2];
  const top = [];
  const bottom = [];
  for (let x = 0; x <= end; x += 1) {
    const h = heightAt(points, x);
    const edge = () => Math.min(18.6, Math.max(0.4, h * (1.08 - jitter * Math.pow(random(), 2))));
    top.push(`${x},${(center - edge()).toFixed(1)}`);
    bottom.unshift(`${x},${(center + edge()).toFixed(1)}`);
  }
  return `M${top.join('L')}L${bottom.join('L')}Z`;
}

document.querySelectorAll('.wave').forEach((svg) => {
  const key = svg.dataset.wave;
  const channels = [[waves[key], 19, 7741], [waves[key + '2'] || waves[key], 57, 99133]];
  channels.forEach(([wave, center, seed]) => {
    const path = document.createElementNS('http://www.w3.org/2000/svg', 'path');
    path.setAttribute('d', channelPath(wave, center, seed));
    svg.appendChild(path);
  });
});

// song markers, as a share of the ruler width
const markers = [20.2, 22.2, 23.2, 24.9, 26.3, 30.8, 36.7];
markers.forEach((left) => {
  const mark = document.createElement('i');
  mark.style.left = left + '%';
  if (left === 30.8) mark.className = 'wide';
  document.getElementById('markers').appendChild(mark);
});
```
